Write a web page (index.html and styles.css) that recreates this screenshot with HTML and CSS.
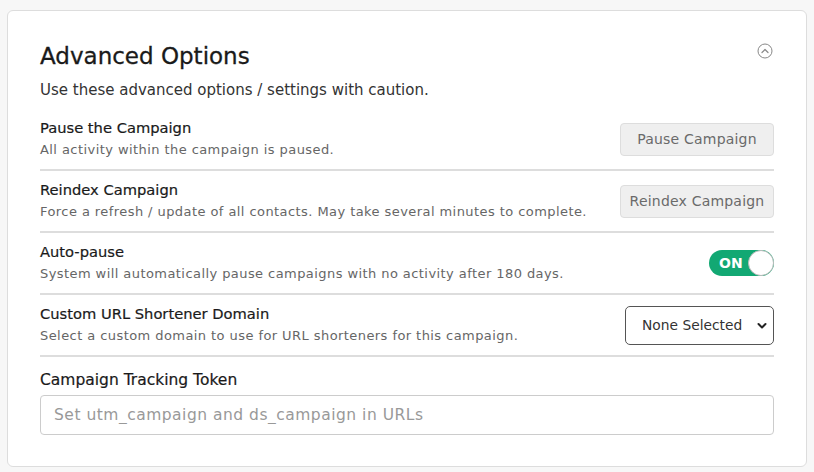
FILE: index.html
```html
<!DOCTYPE html>
<html lang="en">
  <head>
    <meta charset="UTF-8" />
    <meta name="viewport" content="width=device-width, initial-scale=1.0" />
    <title>Advanced Options</title>
    <link rel="stylesheet" href="styles.css">
  </head>
  <body>
    <div class="card">
      <div class="card-header">
        <h2>Advanced Options</h2>
        <span class="collapse-icon">
          <svg width="16" height="16" viewBox="0 0 16 16">
            <circle cx="8" cy="8" r="7" fill="none" stroke="#888" stroke-width="1" />
            <path d="M5 9.5 L8 6.5 L11 9.5" fill="none" stroke="#888" stroke-width="1.2" stroke-linecap="round" stroke-linejoin="round" />
          </svg>
        </span>
      </div>
      <p class="intro">Use these advanced options / settings with caution.</p>

      <div class="option option-first">
        <div class="option-text">
          <div class="option-title">Pause the Campaign</div>
          <div class="option-desc">All activity within the campaign is paused.</div>
        </div>
        <button class="btn">Pause Campaign</button>
      </div>

      <div class="option">
        <div class="option-text">
          <div class="option-title">Reindex Campaign</div>
          <div class="option-desc">Force a refresh / update of all contacts. May take several minutes to complete.</div>
        </div>
        <button class="btn">Reindex Campaign</button>
      </div>

      <div class="option">
        <div class="option-text">
          <div class="option-title">Auto-pause</div>
          <div class="option-desc">System will automatically pause campaigns with no activity after 180 days.</div>
        </div>
        <label class="toggle">
          <span class="toggle-label">ON</span>
          <span class="toggle-knob"></span>
        </label>
      </div>

      <div class="option">
        <div class="option-text">
          <div class="option-title">Custom URL Shortener Domain</div>
          <div class="option-desc">Select a custom domain to use for URL shorteners for this campaign.</div>
        </div>
        <div class="select-wrap">
          <select class="select">
            <option>None Selected</option>
          </select>
          <svg class="select-arrow" width="10" height="8" viewBox="0 0 10 8">
            <path d="M1.5 2 L5 5.5 L8.5 2" fill="none" stroke="#222" stroke-width="2" stroke-linecap="round" stroke-linejoin="round" />
          </svg>
        </div>
      </div>

      <div class="option option-last">
        <div class="option-text full">
          <div class="field-label">Campaign Tracking Token</div>
          <input class="text-input" type="text" placeholder="Set utm_campaign and ds_campaign in URLs" />
        </div>
      </div>
    </div>
  </body>
</html>
```

FILE: styles.css
```css
/* Advanced options panel */
body {
  font-family: "DejaVu Sans", "Open Sans", sans-serif;
  background-color: #f7f7f7;
  margin: 0;
  padding: 10px 7px 5px 7px;
  color: #222;
}
.card {
  background-color: #fff;
  border: 1px solid #ddd;
  border-radius: 6px;
  padding: 30px 32px 31px 32px;
}
.card-header {
  display: flex;
  justify-content: space-between;
  align-items: flex-start;
}
.card-header h2 {
  margin: 0;
  font-size: 23px;
  line-height: 30px;
  font-weight: 400;
  color: #1a1a1a;
  -webkit-text-stroke: 0.3px #1a1a1a;
}
.collapse-icon {
  margin-top: 2px;
  margin-right: 1px;
  display: block;
}
.collapse-icon svg {
  display: block;
}
.intro {
  margin: 8px 0 0 0;
  font-size: 15px;
  line-height: 22px;
  color: #333;
}
.option {
  display: flex;
  justify-content: space-between;
  align-items: center;
  padding: 8px 0;
  border-bottom: 2px solid #ddd;
}
.option-first {
  margin-top: 8px;
}
.option-last {
  border-bottom: none;
  padding: 12px 0 0 0;
}
.option-text.full {
  flex: 1;
}
.option-title {
  font-size: 14.7px;
  line-height: 22px;
  color: #1a1a1a;
  -webkit-text-stroke: 0.2px #1a1a1a;
}
.option-desc {
  font-size: 13px;
  letter-spacing: 0.43px;
  line-height: 22px;
  color: #666;
}
.btn {
  font-family: inherit;
  font-size: 14px;
  letter-spacing: 0.2px;
  color: #6a6a6a;
  background-color: #efefef;
  border: 1px solid #ddd;
  border-radius: 4px;
  height: 33px;
  width: 154px;
  padding: 0;
}
.toggle {
  position: relative;
  display: block;
  width: 65px;
  height: 26px;
  border-radius: 13px;
  background-color: #12a873;
}
.toggle-label {
  position: absolute;
  left: 10px;
  top: 0;
  line-height: 26px;
  font-size: 14px;
  font-weight: 700;
  color: #fff;
}
.toggle-knob {
  position: absolute;
  right: 0;
  top: 0;
  width: 24px;
  height: 24px;
  border-radius: 50%;
  background-color: #fff;
  border: 1px solid #bbb;
}
.select-wrap {
  position: relative;
}
.select {
  font-family: inherit;
  font-size: 13.8px;
  color: #333;
  width: 149px;
  height: 39px;
  padding: 0 26px 0 16px;
  border: 1px solid #555;
  border-radius: 5px;
  background-color: #fff;
  appearance: none;
}
.select-arrow {
  position: absolute;
  right: 7px;
  top: 16px;
}
.field-label {
  font-size: 15.5px;
  line-height: 22px;
  color: #1a1a1a;
  -webkit-text-stroke: 0.2px #1a1a1a;
}
.text-input {
  display: block;
  box-sizing: border-box;
  width: 100%;
  height: 40px;
  margin-top: 4px;
  padding: 0 13px;
  font-family: inherit;
  font-size: 15.5px;
  letter-spacing: 0.5px;
  border: 1px solid #ccc;
  border-radius: 4px;
}
.text-input::placeholder {
  color: #999;
}
```
